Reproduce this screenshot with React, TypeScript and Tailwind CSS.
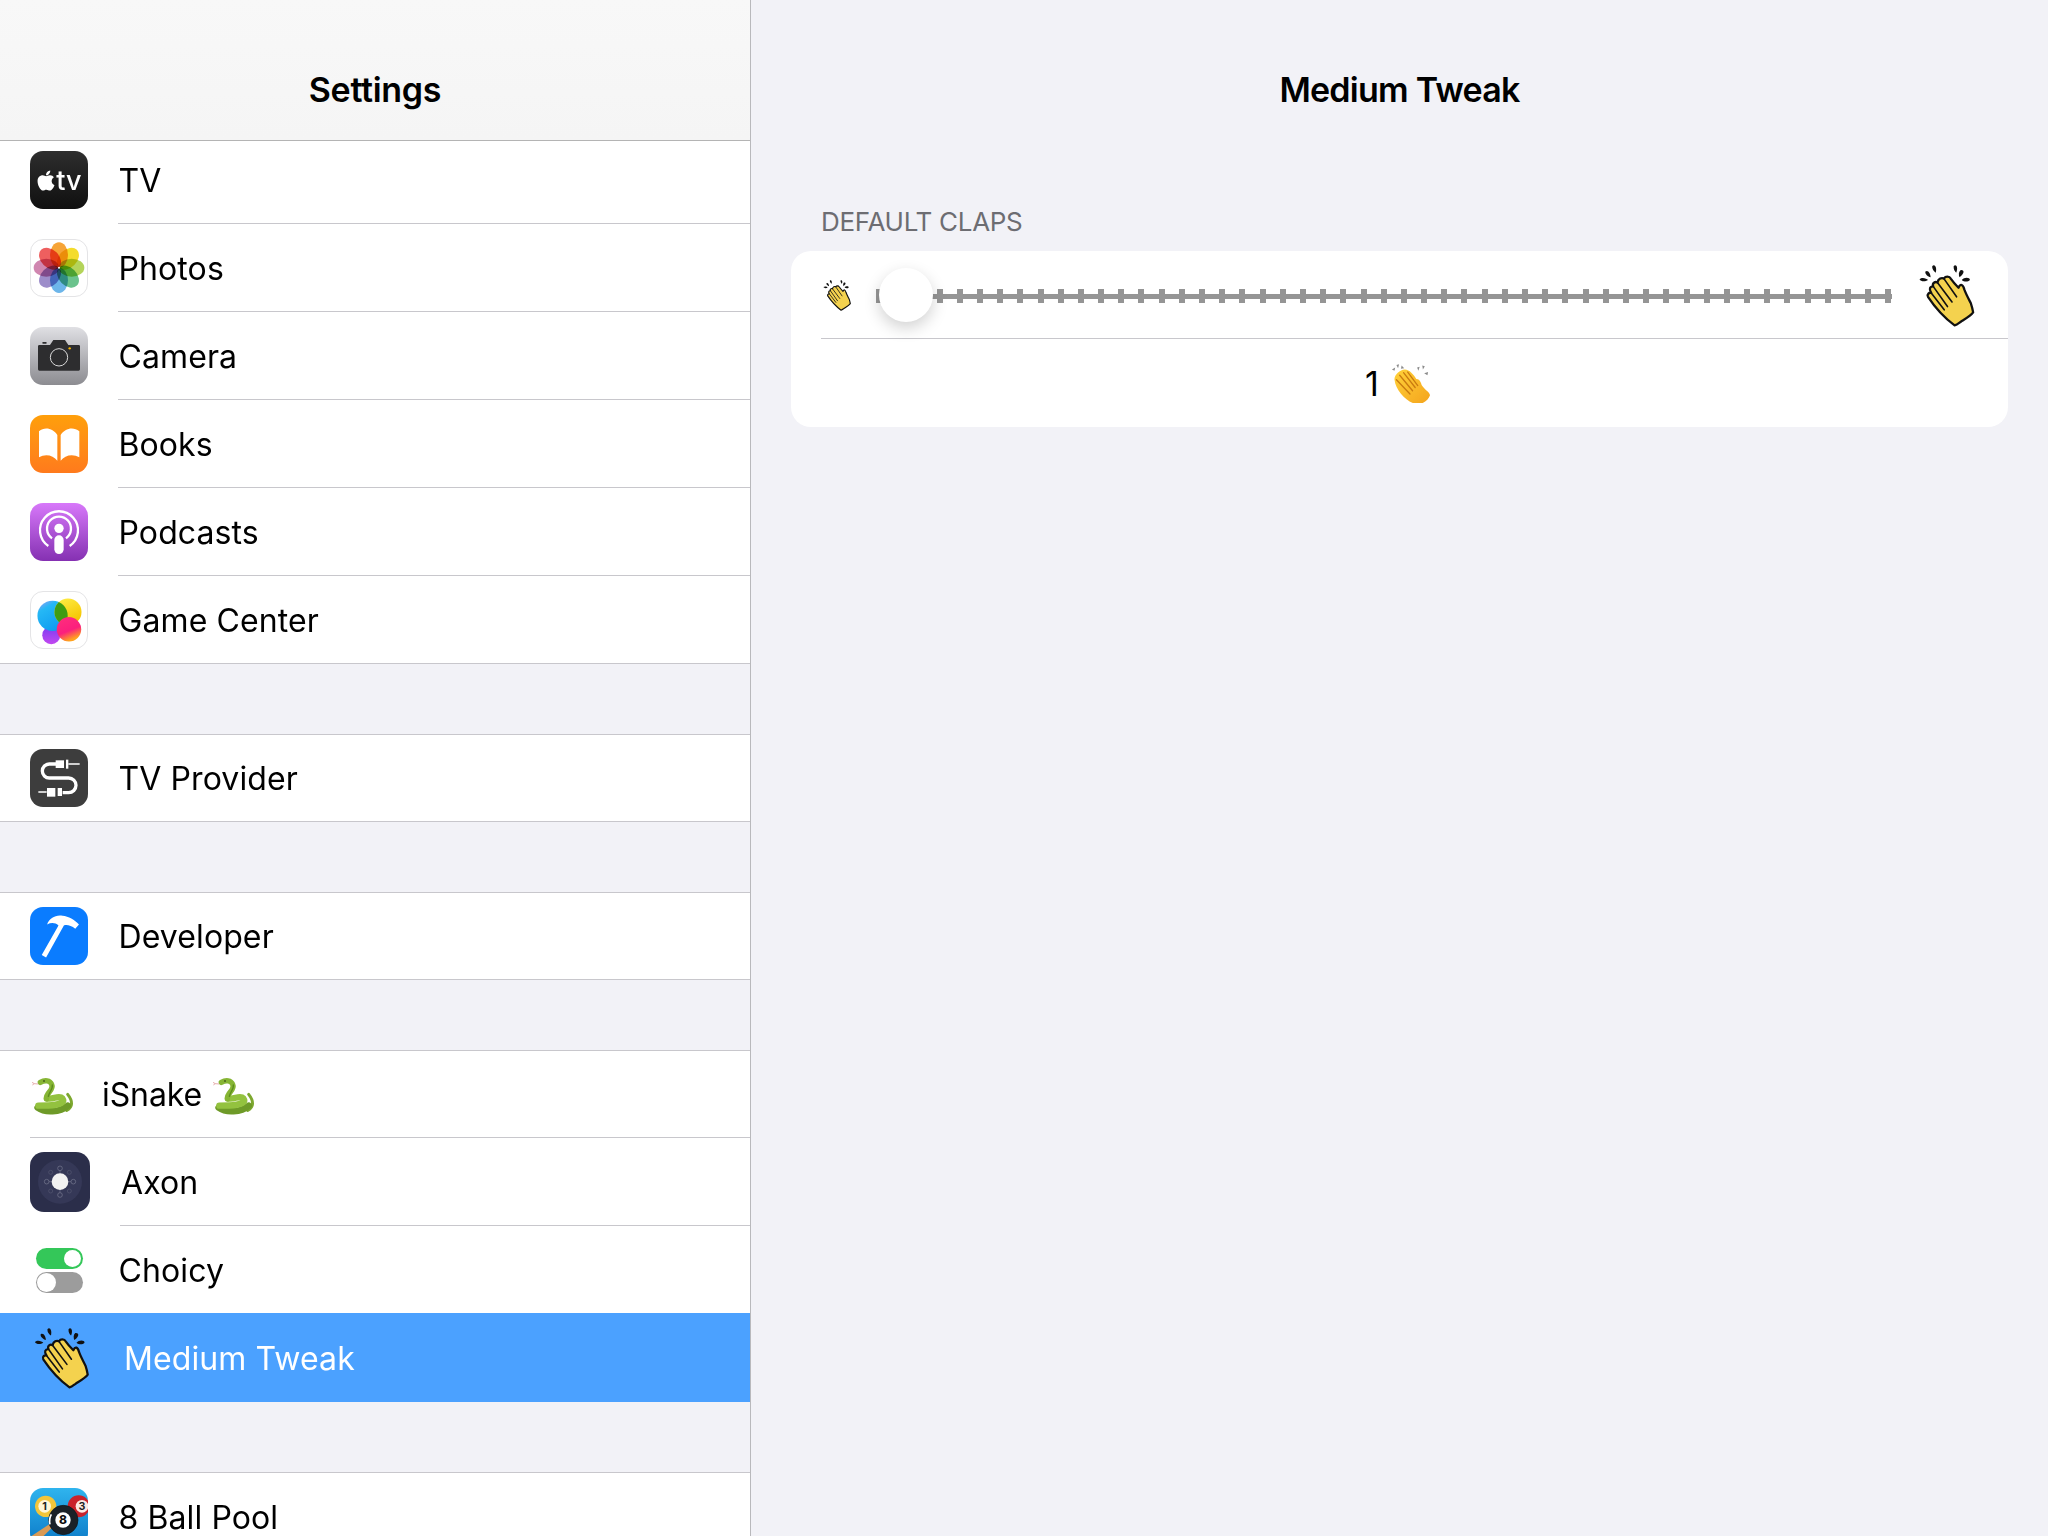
import React from "react";
import { FaApple } from "react-icons/fa";

const Squircle = ({ className = "", children }: { className?: string; children?: React.ReactNode }) => (
    <div className={`h-[58px] w-[58px] shrink-0 overflow-hidden rounded-[13px] ${className}`}>{children}</div>
);

const TvIcon = () => (
    <Squircle className="flex items-center justify-center bg-gradient-to-b from-[#2e2e2e] to-[#101010] text-white">
        <FaApple className="h-[23px] w-[20px]" />
        <span className="text-[27px] leading-none font-medium">tv</span>
    </Squircle>
);

const petals = ["#f6a437", "#f4dc2c", "#b4d45a", "#6bc38d", "#6db6ea", "#9d8dca", "#d086b0", "#ee5f5f"];

const PhotosIcon = () => (
    <Squircle className="border border-[#e4e4e6] bg-white">
        <svg viewBox="93 720 168 168" className="h-full w-full">
            {petals.map((c, i) => (
                <ellipse
                    key={i}
                    cx="177"
                    cy="765"
                    rx="27"
                    ry="38"
                    fill={c}
                    className="mix-blend-multiply"
                    transform={`rotate(${i * 45} 177 803)`}
                />
            ))}
            <circle cx="177" cy="803" r="3" fill="#fff" />
        </svg>
    </Squircle>
);

const CameraIcon = () => (
    <Squircle className="bg-gradient-to-b from-[#e0e0e4] to-[#8c8c91]">
        <svg viewBox="90 981 174 174" className="h-full w-full">
            <path d="M118 1035 H150 L160 1020 H195 L205 1035 H236 A4 4 0 0 1 240 1039 V1108 A4 4 0 0 1 236 1112 H118 A4 4 0 0 1 114 1108 V1039 A4 4 0 0 1 118 1035 Z" fill="#2d2d2f" />
            <rect x="127" y="1026" width="13" height="5" rx="2" fill="#2d2d2f" />
            <circle cx="177" cy="1072" r="26" fill="none" stroke="#d8d8d8" strokeWidth="3" />
            <circle cx="209" cy="1045" r="3.5" fill="#f7b500" />
        </svg>
    </Squircle>
);

const BooksIcon = () => (
    <Squircle className="bg-gradient-to-b from-[#ff9f0a] to-[#ff7a1c]">
        <svg viewBox="90 45 174 174" className="h-full w-full" fill="#fff">
            <path d="M172 105 C160 86 135 78 117 94 V172 C135 160 160 165 172 182 Z" />
            <path d="M182 105 C194 86 219 78 238 94 V172 C219 160 194 165 182 182 Z" />
        </svg>
    </Squircle>
);

const PodcastsIcon = () => (
    <Squircle className="bg-gradient-to-b from-[#d878fa] to-[#8530b2]">
        <svg viewBox="90 309 174 174" className="h-full w-full" fill="none" stroke="#fff" strokeWidth="7">
            <path d="M145 438 A57 57 0 1 1 209 438" />
            <path d="M156 415 A36 36 0 1 1 198 415" />
            <circle cx="177" cy="385" r="14" fill="#fff" stroke="none" />
            <rect x="163" y="406" width="28" height="56" rx="14" fill="#fff" stroke="none" />
        </svg>
    </Squircle>
);

const GameCenterIcon = () => (
    <Squircle className="border border-[#e4e4e6] bg-white">
        <svg viewBox="15 4 174 174" className="h-full w-full">
            <defs>
                <linearGradient id="gcBlue" x1="0" y1="0" x2="0.6" y2="1">
                    <stop offset="0" stopColor="#a89af5" />
                    <stop offset="0.3" stopColor="#25b8f5" />
                    <stop offset="1" stopColor="#0f9bf0" />
                </linearGradient>
                <linearGradient id="gcYellow" x1="0" y1="0" x2="0.5" y2="1">
                    <stop offset="0" stopColor="#fff04a" />
                    <stop offset="1" stopColor="#f5c400" />
                </linearGradient>
                <linearGradient id="gcPink" x1="0" y1="0" x2="0.4" y2="1">
                    <stop offset="0" stopColor="#ff2f7d" />
                    <stop offset="0.65" stopColor="#fb1f7d" />
                    <stop offset="1" stopColor="#ffa21f" />
                </linearGradient>
                <linearGradient id="gcPurple" x1="0" y1="0" x2="0" y2="1">
                    <stop offset="0" stopColor="#7b3df2" />
                    <stop offset="1" stopColor="#c248f0" />
                </linearGradient>
                <clipPath id="gcClip">
                    <circle cx="82" cy="78" r="47" />
                </clipPath>
            </defs>
            <circle cx="78" cy="138" r="28" fill="url(#gcPurple)" />
            <circle cx="82" cy="78" r="47" fill="url(#gcBlue)" />
            <circle cx="130" cy="66" r="42" fill="url(#gcYellow)" />
            <circle cx="130" cy="66" r="42" fill="#3f9c12" clipPath="url(#gcClip)" />
            <circle cx="133" cy="120" r="38" fill="url(#gcPink)" />
        </svg>
    </Squircle>
);

const TvProviderIcon = () => (
    <Squircle className="bg-[#3d3d3d]">
        <svg viewBox="90 1047 174 174" className="h-full w-full" fill="none" stroke="#fff" strokeWidth="10">
            <path d="M168 1092 H148 A21 21 0 0 0 148 1134 H206 A22 22 0 0 1 206 1178 H188" />
            <path d="M205 1092 H239 M115 1176 H140" strokeWidth="5" />
            <rect x="167" y="1081" width="25" height="23" fill="#fff" stroke="none" />
            <rect x="198" y="1079" width="7" height="27" fill="#fff" stroke="none" />
            <rect x="141" y="1164" width="25" height="26" fill="#fff" stroke="none" />
            <rect x="173" y="1164" width="13" height="24" fill="#fff" stroke="none" />
        </svg>
    </Squircle>
);

const DeveloperIcon = () => (
    <Squircle className="bg-[#0a7cff]">
        <svg viewBox="15 22 173 173" className="h-full w-full" fill="#fff">
            <path d="M66 74 C72 56 92 44 112 48 C130 50 148 60 161 74 L150 87 C138 78 126 74 116 77 L63 173 L50 165 L100 77 C90 68 78 68 66 74 Z" />
        </svg>
    </Squircle>
);

const SnakeIcon = () => (
    <svg viewBox="15 20 135 120" className="h-[40px] w-[45px] shrink-0" fill="none">
        <path d="M40 47 L28 46 M28 46 L21 42 M28 46 L22 50" stroke="#d98a8a" strokeWidth="2" />
        <path d="M128 78 C144 98 144 116 125 126" stroke="#7da82f" strokeWidth="9" strokeLinecap="round" />
        <path d="M38 118 C60 134 105 132 128 112" stroke="#6e9a28" strokeWidth="20" strokeLinecap="round" />
        <path d="M40 112 C65 112 128 112 112 90 C102 78 82 96 66 90" stroke="#93c23f" strokeWidth="19" strokeLinecap="round" />
        <path d="M64 92 C62 72 88 66 80 48 C75 36 60 34 46 42" stroke="#86b534" strokeWidth="16" strokeLinecap="round" />
        <path d="M82 50 C84 62 72 72 70 84" stroke="#5d8c1e" strokeWidth="4" strokeLinecap="round" />
        <circle cx="57" cy="38" r="2.5" fill="#1f2d0a" />
    </svg>
);

const AxonIcon = () => (
    <div className="h-[60px] w-[60px] shrink-0 overflow-hidden rounded-[14px] bg-[#2b2e4a]">
        <svg viewBox="90 336 180 180" className="h-full w-full" fill="none">
            <circle cx="180" cy="425" r="66" fill="#353857" />
            <path d="M180 392 V458 M147 425 H213" stroke="#71748c" strokeWidth="2" />
            {[[152, 397], [208, 397], [152, 453], [208, 453]].map(([x, y], i) => (
                <circle key={i} cx={x} cy={y} r="6" stroke="#555871" strokeWidth="2" />
            ))}
            {[[180, 385], [220, 425], [180, 465], [140, 425]].map(([x, y], i) => (
                <circle key={i} cx={x} cy={y} r="7" fill="#353857" stroke="#787b92" strokeWidth="2" />
            ))}
            <circle cx="180" cy="425" r="25" fill="#f2f2f2" />
        </svg>
    </div>
);

const ChoicyIcon = () => (
    <div className="flex h-[58px] w-[58px] shrink-0 flex-col items-center justify-center gap-[3px] pt-[2px]">
        <div className="flex h-[21px] w-[47px] justify-end rounded-full bg-[#34c759] p-[2px]">
            <div className="h-[17px] w-[17px] rounded-full bg-white" />
        </div>
        <div className="flex h-[21px] w-[47px] rounded-full bg-[#9c9c9c] p-[1px]">
            <div className="h-[19px] w-[19px] rounded-full bg-white" />
        </div>
    </div>
);

const ClapLine = ({ className }: { className: string }) => (
    <svg viewBox="40 28 170 197" className={className}>
        <g fill="#111">
            <path d="M42 78 C50 70 64 76 68 80 C60 86 46 86 42 78 Z" />
            <path d="M60 54 C68 48 76 60 76 72 C68 70 58 62 60 54 Z" />
            <path d="M81 38 C88 30 96 40 92 58 C86 54 80 46 81 38 Z" />
            <path d="M147 38 C154 30 162 40 155 58 C150 54 146 46 147 38 Z" />
            <path d="M168 50 C178 48 184 58 165 72 C162 64 162 56 168 50 Z" />
            <path d="M172 80 C180 70 198 72 197 80 C190 88 178 86 172 80 Z" />
        </g>
        <path
            d="M150 220 C130 205 100 180 68 132 C64 124 72 118 78 120 C70 108 74 100 84 100 C80 90 90 84 97 88 C100 76 110 72 117 76 C122 68 134 68 138 76 C145 86 154 96 162 104 C168 90 176 94 180 110 C186 126 194 140 200 152 C204 164 206 174 207 180 C200 190 186 198 170 208 C164 212 158 218 150 220 Z"
            fill="#f4d24e"
            stroke="#111"
            strokeWidth="7"
            strokeLinejoin="round"
        />
        <path
            d="M84 100 L128 162 M97 88 L142 148 M117 76 L156 132 M78 120 L118 172"
            fill="none"
            stroke="#111"
            strokeWidth="5"
            strokeLinecap="round"
        />
    </svg>
);

const ClapEmoji = () => (
    <svg viewBox="30 22 124 124" className="h-[40px] w-[40px] shrink-0">
        <defs>
            <linearGradient id="clapFill" x1="0" y1="0" x2="1" y2="1">
                <stop offset="0" stopColor="#ffd23a" />
                <stop offset="1" stopColor="#f4a31c" />
            </linearGradient>
        </defs>
        <g fill="#8b8b8b">
            <path d="M36 42 L46 36 L44 46 Z" />
            <path d="M50 28 L58 26 L55 38 Z" />
            <path d="M66 30 L74 38 L64 40 Z" />
            <path d="M114 36 L122 34 L118 46 Z" />
            <path d="M130 30 L138 32 L132 42 Z" />
            <path d="M136 54 L148 50 L146 60 Z" />
        </g>
        <path
            d="M44 74 C42 60 60 42 76 42 C90 42 104 58 112 72 C118 70 126 80 128 90 C136 104 154 112 154 122 C150 136 134 148 118 150 C90 150 48 112 44 74 Z"
            fill="url(#clapFill)"
        />
        <path
            d="M60 60 L100 108 M72 52 L108 98 M85 50 L116 92 M50 74 L92 118"
            fill="none"
            stroke="#c97a10"
            strokeWidth="4"
            strokeLinecap="round"
        />
    </svg>
);

const PoolIcon = () => (
    <Squircle>
        <svg viewBox="90 1341 174 174" className="h-full w-full">
            <defs>
                <linearGradient id="poolBg" x1="0" y1="0" x2="0" y2="1">
                    <stop offset="0" stopColor="#2fb4ee" />
                    <stop offset="1" stopColor="#0b78c6" />
                </linearGradient>
            </defs>
            <rect x="90" y="1341" width="174" height="174" fill="url(#poolBg)" />
            <circle cx="137" cy="1396" r="32" fill="#f2c53a" />
            <circle cx="134" cy="1396" r="19" fill="#fff6d8" />
            <text x="134" y="1408" textAnchor="middle" fontSize="32" fontWeight="700" fill="#222">1</text>
            <circle cx="236" cy="1396" r="33" fill="#c9222b" />
            <circle cx="246" cy="1396" r="19" fill="#fbe9e4" />
            <text x="246" y="1408" textAnchor="middle" fontSize="32" fontWeight="700" fill="#222">3</text>
            <path d="M90 1488 L150 1448 L156 1460 L100 1515 H90 Z" fill="#d99a55" />
            <circle cx="190" cy="1437" r="44" fill="#1a2128" stroke="#0e1418" strokeWidth="2" />
            <path d="M154 1420 A42 42 0 0 0 150 1450" fill="none" stroke="#fff" strokeWidth="5" />
            <circle cx="189" cy="1437" r="23" fill="#fff" />
            <text x="189" y="1450" textAnchor="middle" fontSize="36" fontWeight="800" fill="#111">8</text>
        </svg>
    </Squircle>
);

const Row = ({ icon, label, height = "h-[88px]", sep = true }: { icon: React.ReactNode; label: string; height?: string; sep?: boolean }) => (
    <div className={`flex shrink-0 items-center bg-white ${height}`}>
        <div className="flex w-[118px] shrink-0 pl-[30px]">{icon}</div>
        <div className={`flex h-full flex-1 items-center pt-[2px] pl-[0.5px] text-black ${sep ? "border-b border-[#c8c7cc]" : ""}`}>
            {label}
        </div>
    </div>
);

const Gap = () => <div className="h-[72px] shrink-0 border-y border-[#c8c7cc]" />;

const Sidebar = () => (
    <div className="flex h-full w-[751px] shrink-0 flex-col overflow-hidden border-r border-[#b9b9bc] text-[32px] tracking-[0.1px]">
        <div className="relative z-10 flex h-[141px] shrink-0 items-end justify-center border-b border-[#b4b4b4] bg-gradient-to-b from-[#f8f8f8] to-[#f5f5f5] pb-[30px] text-[34px] leading-[40px] font-semibold tracking-[-0.3px] text-black">
            Settings
        </div>
        <div className="-mt-[5px] shrink-0">
            <Row icon={<TvIcon />} label="TV" />
            <Row icon={<PhotosIcon />} label="Photos" />
            <Row icon={<CameraIcon />} label="Camera" />
            <Row icon={<BooksIcon />} label="Books" />
            <Row icon={<PodcastsIcon />} label="Podcasts" />
            <Row icon={<GameCenterIcon />} label="Game Center" height="h-[87px]" sep={false} />
        </div>
        <Gap />
        <Row icon={<TvProviderIcon />} label="TV Provider" height="h-[86px]" sep={false} />
        <Gap />
        <Row icon={<DeveloperIcon />} label="Developer" height="h-[86px]" sep={false} />
        <Gap />
        <div className="flex h-[87px] shrink-0 items-center bg-white">
            <div className="flex h-full flex-1 items-center pl-[30px]">
                <div className="flex h-full flex-1 items-center gap-[9px] border-b border-[#c8c7cc] pt-[2px]">
                    <SnakeIcon />
                    <span className="ml-[18px] tracking-[-0.1px]">iSnake</span>
                    <SnakeIcon />
                </div>
            </div>
        </div>
        <div className="flex h-[88px] shrink-0 items-center bg-white">
            <div className="flex w-[120px] shrink-0 pl-[30px]">
                <AxonIcon />
            </div>
            <div className="flex h-full flex-1 items-center border-b border-[#c8c7cc] pt-[2px] pl-px">Axon</div>
        </div>
        <Row icon={<ChoicyIcon />} label="Choicy" height="h-[87px]" sep={false} />
        <div className="flex h-[89px] shrink-0 items-center bg-[#4ba1ff] pt-[2px] text-white">
            <div className="flex w-[124px] shrink-0 pb-[2px] pl-[34px]">
                <ClapLine className="h-[63px] w-[55px]" />
            </div>
            Medium Tweak
        </div>
        <div className="h-[71px] shrink-0 border-b border-[#c8c7cc]" />
        <Row icon={<PoolIcon />} label="8 Ball Pool" />
    </div>
);

const ticks = Array.from({ length: 51 }, (_, i) => i);

const Slider = () => (
    <div className="relative flex h-[14px] flex-1 items-center justify-between">
        <div className="absolute inset-x-0 top-[5px] h-[5px] bg-[#959595]" />
        {ticks.map((i) => (
            <div key={i} className="relative h-[14px] w-[6px] bg-[#959595]" />
        ))}
        <div className="absolute top-[-21px] left-[3px] h-[54px] w-[54px] rounded-full bg-white shadow-[0_6px_16px_rgba(0,0,0,0.18)]" />
    </div>
);

const Detail = () => (
    <div className="flex h-full flex-1 flex-col bg-[#f2f2f7]">
        <div className="flex h-[141px] shrink-0 items-end justify-center pb-[31px] text-[34px] leading-[40px] font-semibold tracking-[-0.75px] text-black">
            Medium Tweak
        </div>
        <div className="mt-[66px] pl-[70px] text-[26px] leading-[30px] tracking-[-0.3px] text-[#6d6d72]">DEFAULT CLAPS</div>
        <div className="mt-[14px] mr-[40px] ml-[40px] overflow-hidden rounded-[20px] bg-white">
            <div className="flex h-[87px] items-center pr-[31px] pl-[32px]">
                <ClapLine className="h-[32px] w-[28px] shrink-0" />
                <div className="ml-[25px] flex flex-1 items-center pt-[2px]">
                    <Slider />
                </div>
                <ClapLine className="ml-[24px] h-[64px] w-[61px] shrink-0" />
            </div>
            <div className="ml-[30px] h-px bg-[#c8c7cc]" />
            <div className="flex h-[88px] items-center justify-center gap-[11px] pr-[4px] text-[34px] text-black">
                <span>1</span>
                <ClapEmoji />
            </div>
        </div>
    </div>
);

export default function App() {
    return (
        <div className="flex h-[1536px] w-[2048px] overflow-hidden bg-[#f2f2f7] [font-family:Inter,sans-serif]">
            <Sidebar />
            <Detail />
        </div>
    );
}
